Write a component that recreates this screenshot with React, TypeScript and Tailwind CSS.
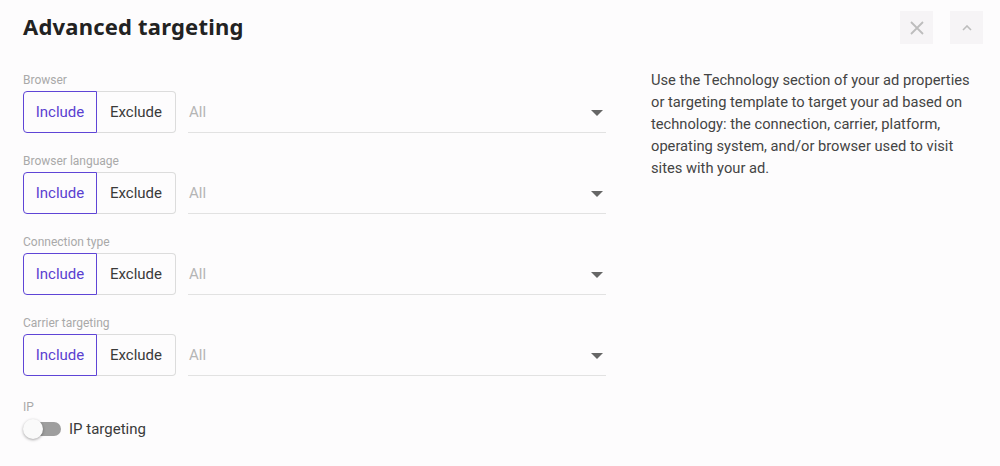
import React from "react";

const rows = ["Browser", "Browser language", "Connection type", "Carrier targeting"];

function Row({ label }: { label: string }) {
  return (
    <div className="flex flex-col">
      <div className="text-[12px] leading-[14px] text-[#a9a9a9] mb-[4px]">{label}</div>
      <div className="flex items-center">
        <div className="flex h-[42px] text-[15px]">
          <div className="w-[74px] flex items-center justify-center border border-[#5f45d6] rounded-l-[4px] text-[#5b3fd0]">
            Include
          </div>
          <div className="w-[79px] flex items-center justify-center border border-l-0 border-[#dcdcdc] rounded-r-[4px] text-[#3a3a3a]">
            Exclude
          </div>
        </div>
        <div className="ml-[12px] w-[418px] h-[42px] flex items-center justify-between border-b border-[#e2e2e2] pr-[2px]">
          <span className="text-[15px] text-[#b5b5b5] pl-[1px] pt-[1px]">All</span>
          <svg width="12" height="6" viewBox="0 0 12 6" className="mr-[1px] mt-[3px]">
            <path d="M0 0 L12 0 L6 6 Z" fill="#666" />
          </svg>
        </div>
      </div>
    </div>
  );
}

export default function App() {
  return (
    <div
      className="w-[1000px] h-[466px] bg-[#fdfcfd] relative overflow-hidden"
      style={{ fontFamily: "Roboto, 'Liberation Sans', sans-serif" }}
    >
      <div className="flex items-start justify-between pl-[23px] pr-[17px] pt-[10px]">
        <h1
          className="text-[22px] font-bold text-[#222] tracking-[0.2px] leading-[33px]"
          style={{ fontFamily: "'Noto Sans', 'Open Sans', sans-serif" }}
        >
          Advanced targeting
        </h1>
        <div className="flex gap-[17px] pt-[1px]">
          <div className="w-[33px] h-[33px] bg-[#f6f4f6] flex items-center justify-center">
            <svg width="14" height="14" viewBox="0 0 14 14">
              <path d="M1 1 L13 13 M13 1 L1 13" stroke="#bdbdbd" strokeWidth="1.8" />
            </svg>
          </div>
          <div className="w-[33px] h-[33px] bg-[#f6f4f6] flex items-center justify-center">
            <svg width="10" height="6" viewBox="0 0 10 6">
              <path d="M1 5 L5 1 L9 5" stroke="#bdbdbd" strokeWidth="1.6" fill="none" />
            </svg>
          </div>
        </div>
      </div>
      <div className="flex pl-[23px] mt-[29px]">
        <div className="flex flex-col gap-[21px] w-[628px]">
          {rows.map((r) => (
            <Row key={r} label={r} />
          ))}
          <div className="flex flex-col mt-[3px]">
            <div className="text-[12px] leading-[14px] text-[#a9a9a9] mb-[4px]">IP</div>
            <div className="flex items-center">
              <div className="relative w-[38px] h-[20px] flex items-center">
                <div className="absolute left-[2px] right-0 h-[14px] rounded-full bg-[#9e9e9e]" />
                <div className="absolute left-0 w-[20px] h-[20px] rounded-full bg-[#fafafa] shadow-[0_1px_3px_rgba(0,0,0,0.35)]" />
              </div>
              <span className="ml-[8px] text-[15px] text-[#3a3a3a]">IP targeting</span>
            </div>
          </div>
        </div>
        <div className="w-[335px] text-[14.7px] leading-[22px] text-[#444] -mt-[4px]">
          Use the Technology section of your ad properties or targeting template to target your ad based on
          technology: the connection, carrier, platform, operating system, and/or browser used to visit
          sites with your ad.
        </div>
      </div>
    </div>
  );
}
